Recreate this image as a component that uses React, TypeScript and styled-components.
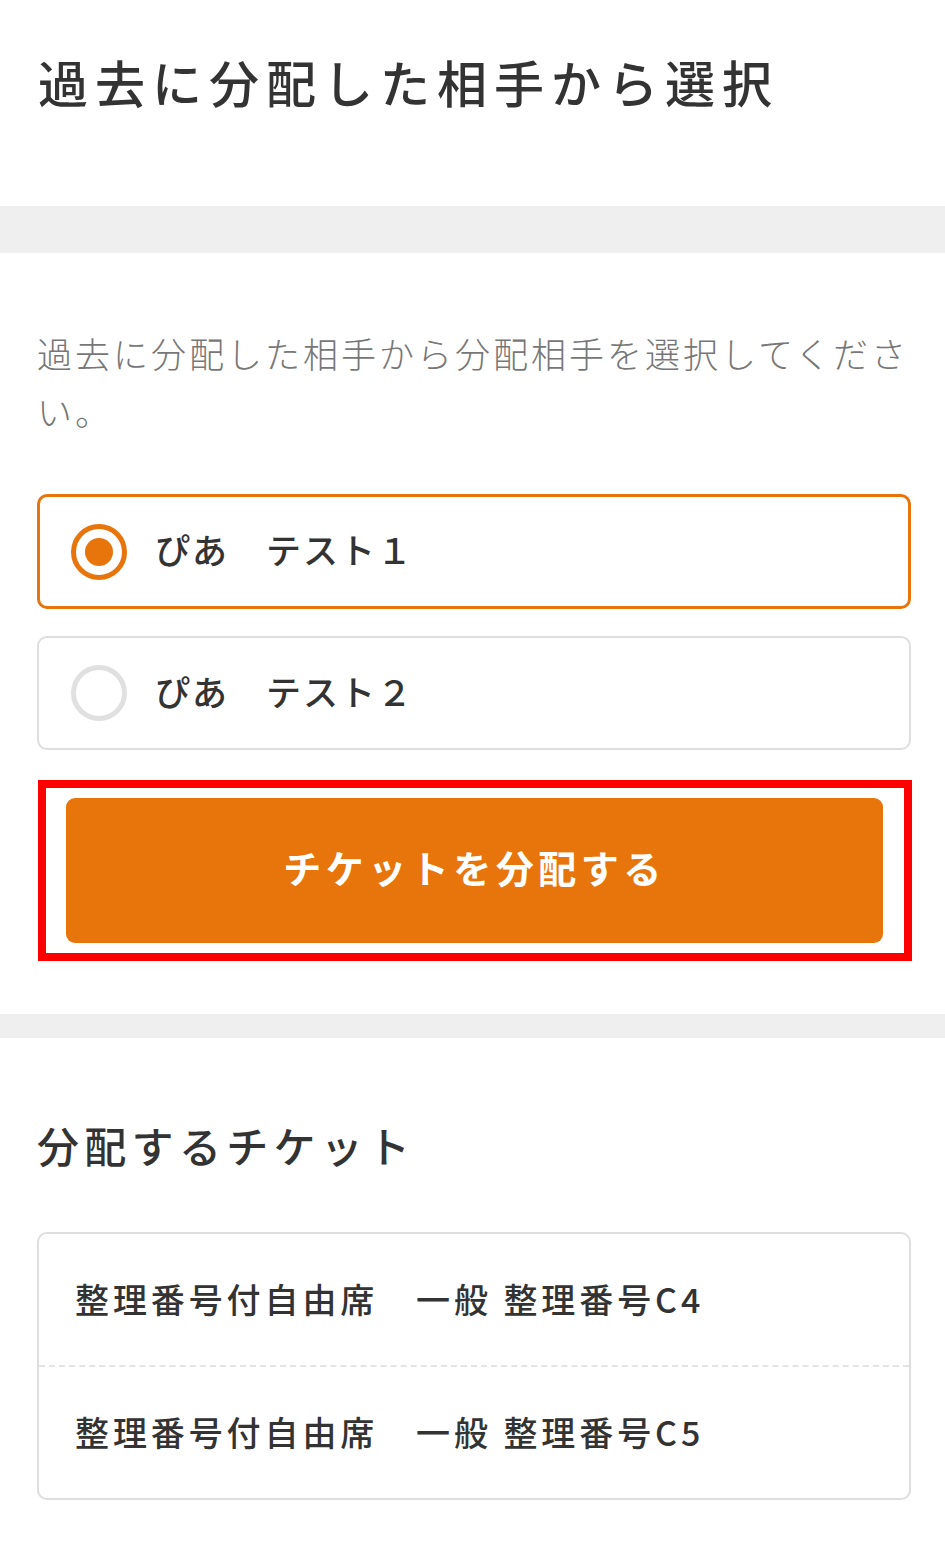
import { useState } from 'react';
import styled, { createGlobalStyle } from 'styled-components';

const GlobalStyle = createGlobalStyle`
  html, body {
    margin: 0;
    padding: 0;
    background: #fff;
  }
  body {
    font-family: "Noto Sans CJK JP", "Noto Sans", sans-serif;
    color: #333;
  }
  * {
    box-sizing: border-box;
  }
`;

const recipients = [
  { id: 1, name: 'ぴあ　テスト１' },
  { id: 2, name: 'ぴあ　テスト２' },
];

const tickets = ['整理番号付自由席　一般 整理番号C4', '整理番号付自由席　一般 整理番号C5'];

const App = () => {
  const [selected, setSelected] = useState(1);

  return (
    <Page>
      <GlobalStyle />
      <Header>
        <Title>過去に分配した相手から選択</Title>
      </Header>
      <Band $height={47} />

      <Section $top={71} $bottom={53}>
        <Description>過去に分配した相手から分配相手を選択してください。</Description>
        <OptionList>
          {recipients.map((r) => (
            <Option key={r.id} $active={selected === r.id} onClick={() => setSelected(r.id)}>
              <Radio $active={selected === r.id} />
              <OptionLabel>{r.name}</OptionLabel>
            </Option>
          ))}
        </OptionList>
        <Highlight>
          <SubmitButton type="button">チケットを分配する</SubmitButton>
        </Highlight>
      </Section>
      <Band $height={24} />

      <Section $top={75} $bottom={63}>
        <SubTitle>分配するチケット</SubTitle>
        <TicketBox>
          {tickets.map((t) => (
            <TicketRow key={t}>{t}</TicketRow>
          ))}
        </TicketBox>
      </Section>
    </Page>
  );
};

export default App;

const Page = styled.div`
  width: 945px;
  background: #fff;
`;

const Header = styled.header`
  padding: 44px 38px 87px;
`;

const Title = styled.h1`
  margin: 0;
  font-size: 50px;
  line-height: 75px;
  font-weight: 500;
  letter-spacing: 7px;
  color: #333;
`;

const Band = styled.div<{ $height: number }>`
  height: ${(p) => p.$height}px;
  background: #efefef;
`;

const Section = styled.section<{ $top: number; $bottom: number }>`
  padding: ${(p) => p.$top}px 34px ${(p) => p.$bottom}px 37px;
  display: flex;
  flex-direction: column;
`;

const Description = styled.p`
  margin: 0 0 54px;
  font-size: 35px;
  line-height: 58px;
  letter-spacing: 3px;
  font-weight: 300;
  color: #777;
`;

const OptionList = styled.div`
  display: flex;
  flex-direction: column;
  gap: 27px;
`;

const Option = styled.label<{ $active: boolean }>`
  display: flex;
  align-items: center;
  height: ${(p) => (p.$active ? 115 : 114)}px;
  padding-left: ${(p) => (p.$active ? 31 : 32)}px;
  border: ${(p) => (p.$active ? '3px solid #e8750b' : '2px solid #dedede')};
  border-radius: 10px;
  cursor: pointer;
`;

const Radio = styled.span<{ $active: boolean }>`
  position: relative;
  width: 56px;
  height: 56px;
  flex-shrink: 0;
  border-radius: 50%;
  border: 5px solid ${(p) => (p.$active ? '#e8750b' : '#e0e0e0')};

  &::after {
    content: '';
    display: ${(p) => (p.$active ? 'block' : 'none')};
    position: absolute;
    top: 9px;
    left: 9px;
    width: 28px;
    height: 28px;
    border-radius: 50%;
    background: #e8750b;
  }
`;

const OptionLabel = styled.span`
  margin-left: 28px;
  padding-bottom: 6px;
  font-size: 35px;
  font-weight: 500;
  letter-spacing: 2px;
  color: #333;
`;

const Highlight = styled.div`
  margin: 30px -1px 0 1px;
  border: 8px solid #ff0000;
  padding: 10px 21px 10px 20px;
`;

const SubmitButton = styled.button`
  display: block;
  width: 100%;
  height: 145px;
  padding: 0 0 8px;
  border: none;
  border-radius: 9px;
  background: #e8750b;
  color: #fff;
  font-family: "Noto Sans CJK JP", "Noto Sans", sans-serif;
  font-size: 38px;
  font-weight: 700;
  letter-spacing: 4.5px;
  cursor: pointer;
`;

const SubTitle = styled.h2`
  margin: 0 0 56px;
  font-size: 42px;
  line-height: 63px;
  font-weight: 500;
  letter-spacing: 5.3px;
  color: #333;
`;

const TicketBox = styled.div`
  border: 2px solid #dedede;
  border-radius: 10px;
`;

const TicketRow = styled.div`
  padding: 39px 36px 40px;
  font-size: 34px;
  line-height: 52px;
  font-weight: 500;
  letter-spacing: 3.9px;
  color: #333;

  & + & {
    border-top: 2px dashed #e4e4e4;
  }
`;
